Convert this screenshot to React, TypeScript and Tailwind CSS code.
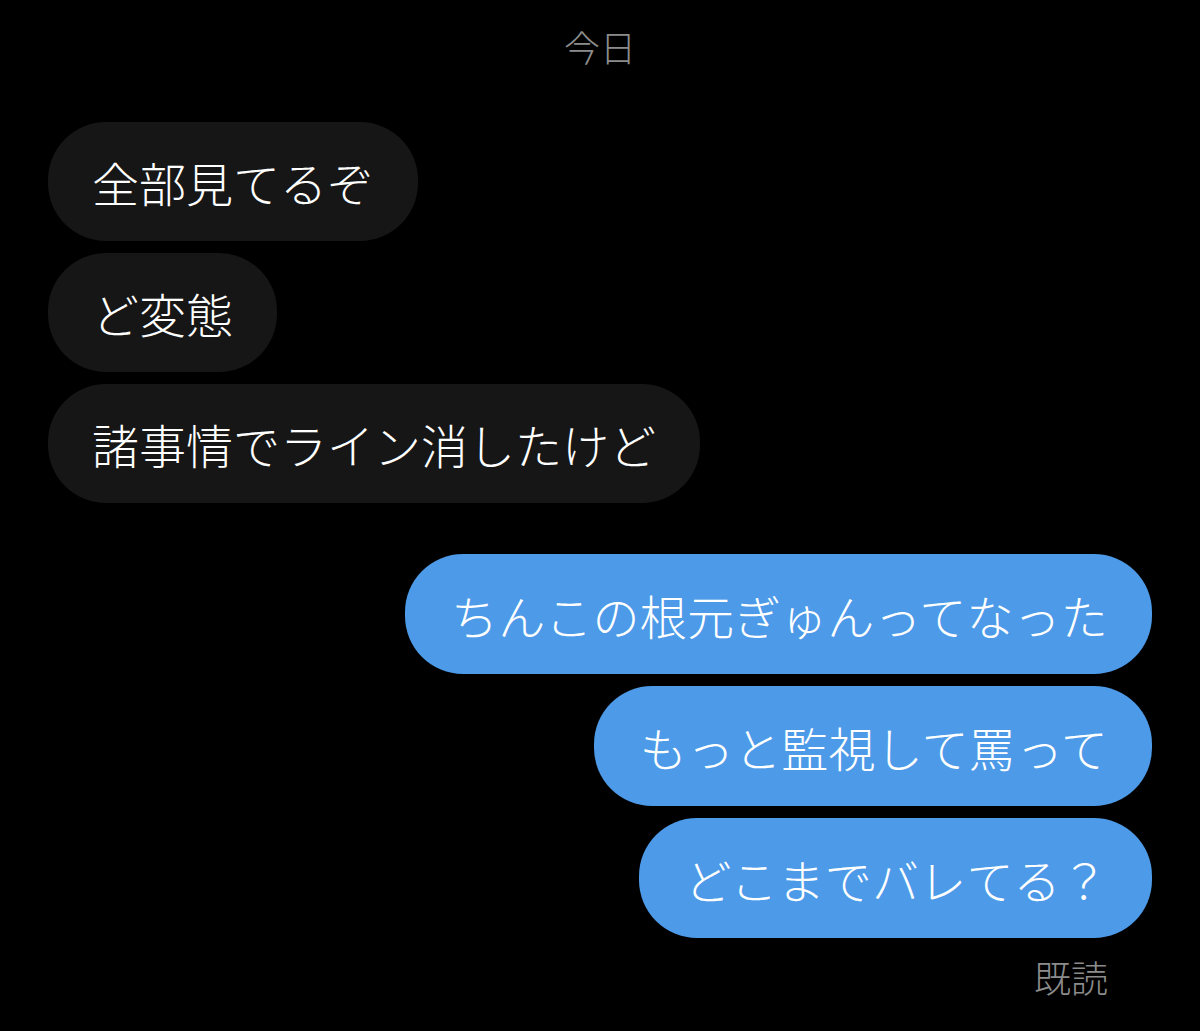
import React from 'react';

const received = ['全部見てるぞ', 'ど変態', '諸事情でライン消したけど'];
const sent = ['ちんこの根元ぎゅんってなった', 'もっと監視して罵って', 'どこまでバレてる？'];

const font = { fontFamily: '"Noto Sans CJK JP", "Noto Sans", sans-serif' };

export default function App() {
  return (
    <div className="min-h-[1031px] w-full bg-black px-[48px] pt-[26px] font-light" style={font}>
      <div className="text-center text-[36px] leading-[40px] text-[#8c8c8c]">今日</div>

      <div className="mt-[56px] flex flex-col items-start gap-[12px]">
        {received.map((m) => (
          <div
            key={m}
            className="flex h-[119px] items-center rounded-[58px] bg-[#161616] px-[44px] text-[47px] leading-none text-white whitespace-nowrap"
          >
            {m}
          </div>
        ))}
      </div>

      <div className="mt-[51px] flex flex-col items-end gap-[12px]">
        {sent.map((m) => (
          <div
            key={m}
            className="flex h-[120px] items-center rounded-[58px] bg-[#4c9ae8] pl-[46px] pr-[44px] text-[47px] leading-none tracking-[0.2px] text-white whitespace-nowrap"
          >
            {m}
          </div>
        ))}
      </div>

      <div className="mt-[17px] pr-[44px] text-right text-[37px] leading-[44px] text-[#8c8c8c]">既読</div>
    </div>
  );
}
